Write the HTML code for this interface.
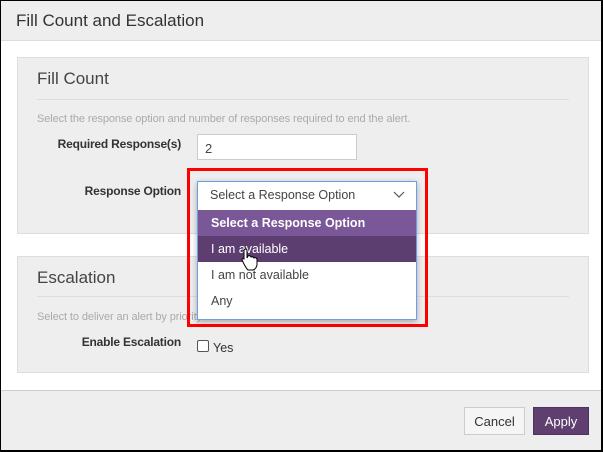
<!DOCTYPE html>
<html><head><style>
*{box-sizing:border-box;margin:0;padding:0}
body{width:603px;height:452px;overflow:hidden;font-family:"Liberation Sans",sans-serif;background:#fff;position:relative}
.a{position:absolute}
.frame{left:0;top:0;width:603px;height:452px;border:1px solid #000;border-right:2px solid #000;border-bottom:2px solid #000}
.lbl{font-size:12px;font-weight:bold;color:#333;text-align:right;width:170px;letter-spacing:-0.2px}
</style></head><body>
<div class="a" style="left:0;top:0;width:603px;height:41px;background:#eeeeee;border-bottom:1px solid #ddd"></div>
<div class="a" style="left:16px;top:11px;font-size:17px;color:#333">Fill Count and Escalation</div>

<div class="a" style="left:17px;top:57px;width:572px;height:177px;background:#eeeeee;border:1px solid #ddd"></div>
<div class="a" style="left:37px;top:69px;font-size:17px;color:#444">Fill Count</div>
<div class="a" style="left:37px;top:99px;width:532px;height:1px;background:#ddd"></div>
<div class="a" style="left:37px;top:113px;font-size:11px;color:#aaa;letter-spacing:-0.1px">Select the response option and number of responses required to end the alert.</div>
<div class="a lbl" style="left:11px;top:137px">Required Response(s)</div>
<div class="a" style="left:197px;top:134px;width:160px;height:26px;background:#fff;border:1px solid #ccc;font-size:13px;color:#445;padding:6px 7px">2</div>
<div class="a lbl" style="left:11px;top:184px">Response Option</div>

<div class="a" style="left:17px;top:256px;width:572px;height:117px;background:#eeeeee;border:1px solid #ddd"></div>
<div class="a" style="left:37px;top:268px;font-size:17px;color:#444">Escalation</div>
<div class="a" style="left:37px;top:296px;width:532px;height:1px;background:#ddd"></div>
<div class="a" style="left:37px;top:311px;font-size:11px;color:#aaa;letter-spacing:-0.1px">Select to deliver an alert by priority until fill count is met</div>
<div class="a lbl" style="left:11px;top:335px">Enable Escalation</div>
<div class="a" style="left:197px;top:340px;width:12px;height:12px;border:1px solid #555;border-radius:2px;background:#fff"></div>
<div class="a" style="left:213px;top:341px;font-size:12.5px;color:#333">Yes</div>

<div class="a" style="left:0;top:390px;width:603px;height:62px;background:#eeeeee;border-top:1px solid #ccc"></div>
<div class="a" style="left:464px;top:407px;width:61px;height:28px;background:#f5f5f5;border:1px solid #ccc;font-size:13px;color:#333;text-align:center;line-height:27px">Cancel</div>
<div class="a" style="left:533px;top:407px;width:56px;height:28px;background:#5e3f70;border:1px solid #4d3260;font-size:13px;color:#fff;text-align:center;line-height:27px">Apply</div>

<div class="a" style="left:187px;top:168px;width:241px;height:159px;border:3px solid #f00"></div>
<div class="a" style="left:197px;top:181px;width:220px;height:139px;background:#fff;border:1px solid #6a9ee8;box-shadow:0 2px 6px rgba(0,0,0,.3)"></div>
<div class="a" style="left:210px;top:188px;font-size:12.5px;color:#444">Select a Response Option</div>
<svg class="a" style="left:393px;top:191px" width="12" height="8"><path d="M1 1 L6 6 L11 1" fill="none" stroke="#555" stroke-width="1.2"/></svg>
<div class="a" style="left:198px;top:210px;width:218px;height:26px;background:#7a5796"></div>
<div class="a" style="left:211px;top:216px;font-size:12.5px;font-weight:bold;color:#fff">Select a Response Option</div>
<div class="a" style="left:198px;top:236px;width:218px;height:26px;background:#5c3f70"></div>
<div class="a" style="left:211px;top:242px;font-size:12.5px;color:#fff">I am available</div>
<div class="a" style="left:211px;top:268px;font-size:12.5px;color:#444">I am not available</div>
<div class="a" style="left:211px;top:294px;font-size:12.5px;color:#444">Any</div>
<svg class="a" style="left:240px;top:248px" width="20" height="24"><path d="M4 2 Q6 0 7 2 L7 10 L8 8 Q10 7 11 9 Q13 8 14 10 Q16 9 17 11 L17 17 Q16 21 13 22 L8 22 Q6 20 4 16 L2 12 Q2 10 4 11 L4 2Z" fill="#fff" stroke="#000" stroke-width="1"/></svg>
<div class="a frame"></div>
</body></html>
